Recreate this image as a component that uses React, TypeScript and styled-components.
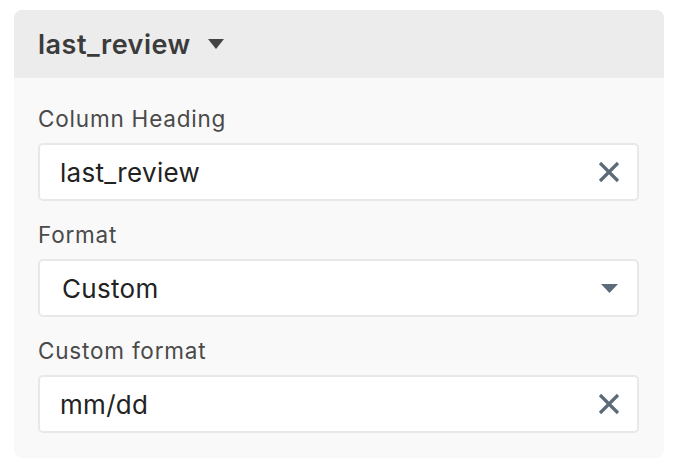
import { createGlobalStyle, styled } from 'styled-components';

const GlobalStyle = createGlobalStyle`
  html, body {
    margin: 0;
    padding: 0;
    background: #ffffff;
  }
  body {
    font-family: Inter, 'Noto Sans', sans-serif;
  }
`;

const Page = styled.div`
  padding: 10px 14px 16px 14px;
`;

const Panel = styled.section`
  width: 650px;
  border-radius: 8px;
  overflow: hidden;
  background: #f9f9f9;
`;

const Header = styled.header`
  height: 68px;
  background: #ececec;
  display: flex;
  align-items: center;
  gap: 17px;
  padding: 0 24px;
  box-sizing: border-box;
`;

const Title = styled.h2`
  margin: 0;
  font-size: 27px;
  font-weight: 600;
  color: #3b3b3b;
  letter-spacing: 0.5px;
`;

const Body = styled.div`
  display: flex;
  flex-direction: column;
  gap: 19px;
  padding: 26px 25px 25px 24px;
`;

const Field = styled.div`
  display: flex;
  flex-direction: column;
  gap: 10px;
`;

const Label = styled.label`
  padding-top: 1px;
  font-size: 22.5px;
  line-height: 28px;
  letter-spacing: 0.8px;
  color: #4a4a4a;
`;

const Box = styled.div`
  height: 58px;
  box-sizing: border-box;
  background: #ffffff;
  border: 2px solid #e8e8e8;
  border-radius: 5px;
  display: flex;
  align-items: center;
  justify-content: space-between;
  padding: 0 16px 0 20px;
`;

const Value = styled.span<{ $indent?: number }>`
  font-size: 26px;
  letter-spacing: 0.3px;
  color: #222222;
  padding-left: ${(p) => p.$indent ?? 0}px;
`;

const IconButton = styled.button`
  border: none;
  background: none;
  padding: 0;
  display: flex;
  align-items: center;
  justify-content: center;
  width: 24px;
  height: 24px;
  cursor: pointer;
`;

const Caret = ({ color, w, h }: { color: string; w: number; h: number }) => (
  <svg width={w} height={h} viewBox={`0 0 ${w} ${h}`}>
    <polygon points={`0,0 ${w},0 ${w / 2},${h}`} fill={color} />
  </svg>
);

const Cross = () => (
  <svg width="22" height="22" viewBox="0 0 22 22">
    <path
      d="M2 2 L20 20 M20 2 L2 20"
      stroke="#5c6b79"
      strokeWidth="3.2"
      strokeLinecap="butt"
    />
  </svg>
);

export default function App() {
  return (
    <>
      <GlobalStyle />
      <Page>
        <Panel>
          <Header>
            <Title>last_review</Title>
            <Caret color="#444444" w={16} h={10} />
          </Header>
          <Body>
            <Field>
              <Label>Column Heading</Label>
              <Box>
                <Value>last_review</Value>
                <IconButton aria-label="Clear">
                  <Cross />
                </IconButton>
              </Box>
            </Field>
            <Field>
              <Label>Format</Label>
              <Box>
                <Value $indent={2}>Custom</Value>
                <IconButton aria-label="Open">
                  <Caret color="#5c6b79" w={17} h={9} />
                </IconButton>
              </Box>
            </Field>
            <Field>
              <Label>Custom format</Label>
              <Box>
                <Value>mm/dd</Value>
                <IconButton aria-label="Clear">
                  <Cross />
                </IconButton>
              </Box>
            </Field>
          </Body>
        </Panel>
      </Page>
    </>
  );
}
